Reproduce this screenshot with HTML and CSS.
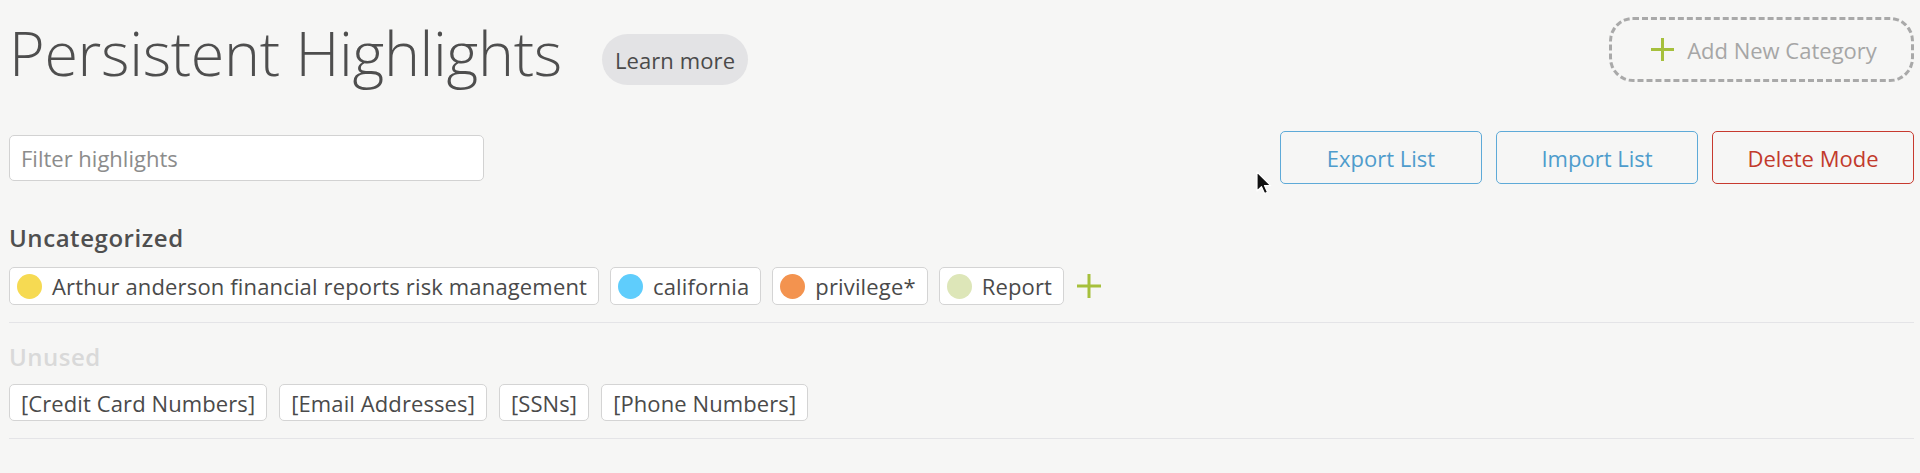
FILE: index.html
```html
<!DOCTYPE html>
<html>
<head>
<meta charset="utf-8">
<link rel="stylesheet" href="styles.css">
</head>
<body>
<div class="page">
  <header class="header">
    <h1 class="title">Persistent Highlights</h1>
    <button class="learn">Learn more</button>
    <button class="add-cat">
      <svg class="plus" width="25" height="25" viewBox="0 0 25 25"><path d="M12.5 1v23M1 12.5h23" stroke="#a6c03c" stroke-width="3" fill="none"/></svg>
      <span>Add New Category</span>
    </button>
  </header>

  <div class="toolbar">
    <input class="filter" type="text" placeholder="Filter highlights">
    <div class="actions">
      <button class="btn btn-blue">Export List</button>
      <button class="btn btn-blue">Import List</button>
      <button class="btn btn-red">Delete Mode</button>
    </div>
  </div>

  <section class="group">
    <h2 class="group-title">Uncategorized</h2>
    <div class="tags">
      <span class="tag"><i class="dot dot-yellow"></i>Arthur anderson financial reports risk management</span>
      <span class="tag"><i class="dot dot-blue"></i>california</span>
      <span class="tag"><i class="dot dot-orange"></i>privilege*</span>
      <span class="tag"><i class="dot dot-green"></i>Report</span>
      <svg class="add-tag" width="26" height="26" viewBox="0 0 26 26"><path d="M13 1v24M1 13h24" stroke="#a6c03c" stroke-width="3" fill="none"/></svg>
    </div>
  </section>

  <section class="group unused">
    <h2 class="group-title muted">Unused</h2>
    <div class="tags">
      <span class="tag plain">[Credit Card Numbers]</span>
      <span class="tag plain">[Email Addresses]</span>
      <span class="tag plain">[SSNs]</span>
      <span class="tag plain">[Phone Numbers]</span>
    </div>
  </section>
</div>
<svg class="cursor" width="16" height="24" viewBox="0 0 16 24"><path d="M1 1v19l4.5-4.3 3 6.8 3-1.3-3-6.6h6.2z" fill="#111" stroke="#fff" stroke-width="1.2" stroke-linejoin="round"/></svg>
</body>
</html>
```
FILE: styles.css
```css
* { box-sizing: border-box; }
html, body {
  margin: 0;
  background: #f6f6f5;
  font-family: "Open Sans", "Liberation Sans", sans-serif;
  color: #4b4b4b;
}
.page {
  padding: 12px 6px 0 9px;
}
.header {
  display: flex;
  align-items: flex-start;
  height: 94px;
}
.title {
  margin: 0;
  font-size: 61px;
  font-weight: 300;
  color: #4e4e4e;
  line-height: 82px;
  letter-spacing: -0.3px;
}
.learn {
  margin: 22px 0 0 40px;
  height: 51px;
  padding: 0 13px;
  border: none;
  border-radius: 26px;
  background: #e3e3e5;
  font-family: inherit;
  font-size: 22px;
  letter-spacing: 0.1px;
  color: #4a4a4a;
}
.add-cat {
  margin: 5px 0 0 auto;
  width: 305px;
  height: 65px;
  border: 3px dashed #a9a9a9;
  border-radius: 24px;
  background: transparent;
  display: flex;
  align-items: center;
  justify-content: center;
  gap: 12px;
  font-family: inherit;
  font-size: 22px;
  color: #a6a6a6;
  padding: 0 0 0 4px;
}
.plus { display: block; }
.toolbar {
  margin-top: 25px;
  display: flex;
  align-items: center;
  height: 53px;
}
.filter {
  width: 475px;
  height: 46px;
  border: 1px solid #d2d2d2;
  border-radius: 5px;
  background: #fff;
  padding: 0 11px;
  font-family: inherit;
  font-size: 22px;
  color: #4a4a4a;
  outline: none;
}
.filter::placeholder { color: #8c8c8c; }
.actions {
  margin-left: auto;
  display: flex;
  gap: 14px;
}
.btn {
  width: 202px;
  height: 53px;
  border-radius: 5px;
  background: transparent;
  font-family: inherit;
  font-size: 22px;
}
.btn-blue { border: 1.5px solid #5eaad8; color: #4e9ccc; }
.btn-red { border: 1.5px solid #c73a2f; color: #c23a2c; }
.group { margin-top: 38px; }
.group-title {
  margin: 0 0 14px;
  font-size: 24px;
  font-weight: 600;
  line-height: 31px;
  letter-spacing: 0.55px;
  color: #4f4f4f;
}
.muted { color: #d9d9d9; line-height: 30px; margin-bottom: 12px; letter-spacing: 0.5px; }
.tags {
  display: flex;
  align-items: center;
  gap: 11px;
  padding-bottom: 17px;
  border-bottom: 1px solid #e4e4e7;
}
.tag {
  display: inline-flex;
  align-items: center;
  height: 38px;
  padding: 0 11px 0 7px;
  border: 1px solid #d4d4d4;
  border-radius: 5px;
  background: #fff;
  font-size: 22px;
  letter-spacing: 0.15px;
  color: #4a4a4a;
  white-space: nowrap;
}
.dot {
  width: 25px;
  height: 25px;
  border-radius: 50%;
  margin-right: 10px;
  flex: none;
}
.dot-yellow { background: #f6da52; }
.dot-blue { background: #5fcdfc; }
.dot-orange { background: #f3934f; }
.dot-green { background: #dde6b8; }
.add-tag { margin-left: 1px; display: block; }
.unused { margin-top: 19px; }
.unused .tags { gap: 12px; padding-bottom: 17px; }
.tag.plain { height: 37px; padding: 0 11px; letter-spacing: 0.1px; }
.cursor {
  position: absolute;
  left: 1256px;
  top: 171px;
}
```
